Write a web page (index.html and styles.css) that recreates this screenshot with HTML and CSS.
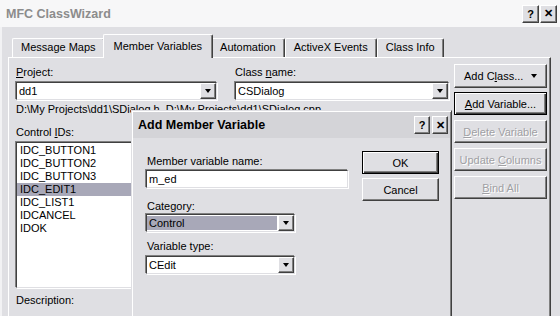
FILE: index.html
```html
<!DOCTYPE html>
<html lang="en">
<head>
  <meta charset="UTF-8">
  <title>MFC ClassWizard</title>
  <link rel="stylesheet" href="styles.css">
</head>
<body>

  <div class="window">
    <div class="titlebar">
      <span class="title">MFC ClassWizard</span>
      <span class="capbtn">?</span>
      <span class="capbtn">&#x2715;</span>
    </div>

    <div class="client">
      <div class="tabs">
        <div class="tab">Message Maps</div>
        <div class="tab active">Member Variables</div>
        <div class="tab">Automation</div>
        <div class="tab">ActiveX Events</div>
        <div class="tab">Class Info</div>
      </div>

      <div class="panel">
        <div class="main">
          <div class="pickers">
            <div class="field project">
              <div class="label"><u>P</u>roject:</div>
              <div class="combo">
                <span class="val">dd1</span>
                <span class="drop"><i></i></span>
              </div>
            </div>
            <div class="field classname">
              <div class="label">Class <u>n</u>ame:</div>
              <div class="combo">
                <span class="val">CSDialog</span>
                <span class="drop"><i></i></span>
              </div>
            </div>
          </div>

          <div class="path">D:\My Projects\dd1\SDialog.h, D:\My Projects\dd1\SDialog.cpp</div>

          <div class="label ids">Control <u>I</u>Ds:</div>
          <ul class="listbox">
            <li>IDC_BUTTON1</li>
            <li>IDC_BUTTON2</li>
            <li>IDC_BUTTON3</li>
            <li class="sel">IDC_EDIT1</li>
            <li>IDC_LIST1</li>
            <li>IDCANCEL</li>
            <li>IDOK</li>
          </ul>

          <div class="label desc">Description:</div>
        </div>

        <div class="side">
          <div class="btn addclass"><span>Add C<u>l</u>ass...</span><i class="arrow"></i></div>
          <div class="btn default"><span><u>A</u>dd Variable...</span></div>
          <div class="btn disabled"><span><u>D</u>elete Variable</span></div>
          <div class="btn disabled"><span>Update <u>C</u>olumns</span></div>
          <div class="btn disabled"><span><u>B</u>ind All</span></div>
        </div>
      </div>
    </div>

    <!-- dialog on top of the wizard -->
    <div class="dialog">
      <div class="dlg-title">
        <span class="dlg-caption">Add Member Variable</span>
        <span class="capbtn">?</span>
        <span class="capbtn">&#x2715;</span>
      </div>
      <div class="dlg-body">
        <div class="dlg-fields">
          <div class="label">Member variable name:</div>
          <div class="edit">m_ed</div>

          <div class="label cat">Category:</div>
          <div class="combo">
            <span class="val sel">Control</span>
            <span class="drop"><i></i></span>
          </div>

          <div class="label vtype">Variable type:</div>
          <div class="combo">
            <span class="val">CEdit</span>
            <span class="drop"><i></i></span>
          </div>
        </div>

        <div class="dlg-buttons">
          <div class="btn default">OK</div>
          <div class="btn">Cancel</div>
        </div>
      </div>
    </div>
  </div>

</body>
</html>
```

FILE: styles.css
```css
* {
  box-sizing: border-box;
}

body {
  margin: 0;
  font-family: 'Liberation Sans', Arial, sans-serif;
  font-size: 11px;
  color: #000;
  background-color: #dfdfe3;
}

.window {
  width: 560px;
  height: 316px;
  overflow: hidden;
  position: relative;
  background-color: #dfdfe3;
}

/* caption */
.titlebar {
  height: 27px;
  display: flex;
  align-items: center;
  padding: 0 3px 0 6px;
  background-color: #f7f7f8;
}

.title {
  flex: 1;
  font-weight: bold;
  font-size: 12.5px;
  color: #8c8c8c;
}

.capbtn {
  width: 17px;
  height: 18px;
  margin-left: 1px;
  display: flex;
  align-items: center;
  justify-content: center;
  font-weight: bold;
  font-size: 11px;
  background-color: #dfdfe3;
  border: 1px solid;
  border-color: #fff #404040 #404040 #fff;
  box-shadow: inset -1px -1px #808080;
}

/* tabs */
.client {
  border-left: 2px solid #f2f2f4;
  padding: 7px 0 0 6px;
}

.tabs {
  display: flex;
  align-items: flex-end;
  height: 24px;
  padding-left: 4px;
  margin-bottom: -1px;
  position: relative;
  z-index: 1;
}

.tab {
  height: 19px;
  margin-bottom: 1px;
  padding: 2px 8px 0;
  line-height: 13px;
  background-color: #dfdfe3;
  border: 1px solid;
  border-color: #fff #404040 transparent #fff;
  border-bottom: none;
  border-radius: 2px 2px 0 0;
  box-shadow: inset -1px 0 #808080;
  white-space: nowrap;
}

.tab.active {
  height: 24px;
  margin: 0 -2px;
  padding: 5px 10px 0;
  position: relative;
  z-index: 2;
}

.panel {
  display: flex;
  width: 543px;
  height: 270px;
  border-top: 1px solid #fff;
  border-left: 1px solid #fff;
  border-right: 1px solid #404040;
  box-shadow: inset -1px 0 #808080;
}

.main {
  width: 440px;
  padding: 8px 0 0 7px;
}

.pickers {
  display: flex;
  gap: 18px;
}

.project {
  width: 201px;
}

.classname {
  width: 214px;
}

.label {
  height: 13px;
  line-height: 13px;
  white-space: nowrap;
}

/* sunken controls */
.combo, .edit, .listbox {
  background-color: #fff;
  border: 1px solid;
  border-color: #404040 #dfdfe3 #dfdfe3 #404040;
  box-shadow: -1px -1px 0 #808080, 1px 1px 0 #fff;
}

.combo {
  display: flex;
  height: 18px;
  margin-top: 3px;
}

.combo .val {
  flex: 1;
  line-height: 16px;
  padding-left: 2px;
  white-space: nowrap;
}

.combo .val.sel {
  margin: 1px 1px 1px 0;
  line-height: 14px;
  padding-left: 2px;
  background-color: #a8a8b8;
}

.drop {
  width: 16px;
  height: 16px;
  display: flex;
  align-items: center;
  justify-content: center;
  background-color: #dfdfe3;
  border: 1px solid;
  border-color: #fff #404040 #404040 #fff;
  box-shadow: inset -1px -1px #808080;
}

.drop i, .btn .arrow {
  width: 0;
  height: 0;
  border-left: 3.5px solid transparent;
  border-right: 3.5px solid transparent;
  border-top: 4px solid #000;
}

.path {
  margin-top: 3px;
  line-height: 13px;
  white-space: nowrap;
}

.ids {
  margin-top: 10px;
}

.listbox {
  list-style: none;
  margin: 3px 0 0;
  padding: 1px 0 0;
  width: 200px;
  height: 146px;
}

.listbox li {
  height: 13px;
  line-height: 13px;
  padding-left: 3px;
}

.listbox li.sel {
  background-color: #a8a8b8;
}

.desc {
  margin-top: 6px;
}

/* buttons */
.side {
  width: 93px;
  margin-left: 5px;
  padding-top: 6px;
}

.btn {
  height: 23px;
  margin-bottom: 5px;
  display: flex;
  align-items: center;
  justify-content: center;
  background-color: #dfdfe3;
  border: 1px solid;
  border-color: #fff #404040 #404040 #fff;
  box-shadow: inset -1px -1px #808080;
  white-space: nowrap;
}

.btn.addclass {
  height: 24px;
  margin-bottom: 4px;
  justify-content: space-between;
  padding: 0 9px;
}

.btn.default {
  border-color: #000;
  box-shadow: inset 1px 1px #fff, inset -1px -1px #404040, inset -2px -2px #808080;
}

.btn.disabled {
  color: #a0a0a4;
  text-shadow: 1px 1px #fff;
}

/* Add Member Variable */
.dialog {
  position: absolute;
  left: 131px;
  top: 110px;
  width: 321px;
  height: 220px;
  padding: 1px;
  background-color: #dfdfe3;
  border: 1px solid;
  border-color: #dfdfe3 #404040 #404040 #dfdfe3;
  box-shadow: inset 1px 1px #fff, inset -1px -1px #808080;
  z-index: 5;
}

.dlg-title {
  height: 26px;
  display: flex;
  align-items: center;
  padding: 0 2px 0 5px;
  background-color: #d4d4d8;
}

.dlg-caption {
  flex: 1;
  font-weight: bold;
  font-size: 12.5px;
}

.dlg-title .capbtn {
  width: 16px;
  margin-left: 2px;
}

.dlg-body {
  display: flex;
  padding: 13px 0 0 13px;
}

.dlg-fields {
  width: 202px;
  padding-top: 4px;
}

.dlg-fields .label {
  padding-left: 1px;
}

.edit {
  height: 18px;
  margin-top: 2px;
  line-height: 16px;
  padding-left: 2px;
}

.dlg-fields .combo {
  width: 149px;
  margin-top: 1px;
}

.cat {
  margin-top: 12px;
}

.vtype {
  margin-top: 8px;
}

.dlg-fields .vtype + .combo {
  margin-top: 3px;
}

.dlg-buttons {
  width: 77px;
  margin-left: 14px;
}

.dlg-buttons .btn {
  margin-bottom: 4px;
}
```
